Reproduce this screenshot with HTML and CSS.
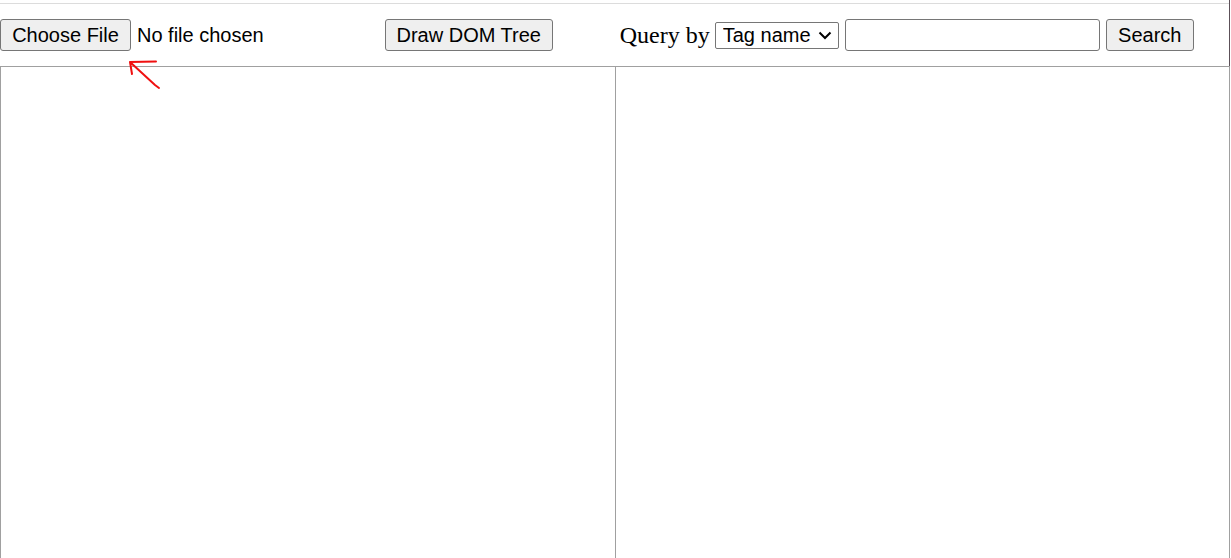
FILE: index.html
```
<!DOCTYPE html>
<html>
<head>
<meta charset="utf-8">
<link rel="stylesheet" href="styles.css">
</head>
<body>
<div class="page">
  <div class="header">
    <div class="topline"></div>
    <div class="toolbar">
      <div class="file-group">
        <button class="btn btn-file">Choose File</button>
        <span class="file-label">No file chosen</span>
      </div>
      <button class="btn btn-draw">Draw DOM Tree</button>
      <div class="query-group">
        <span class="query-label">Query by</span>
        <span class="select-wrap">
          <select class="select">
            <option>Tag name</option>
          </select>
          <svg class="chevron" width="14" height="9" viewBox="0 0 14 9">
            <path d="M1.5 1.5 L7 7 L12.5 1.5" fill="none" stroke="#000" stroke-width="2"/>
          </svg>
        </span>
        <input class="text-input" type="text">
        <button class="btn btn-search">Search</button>
      </div>
    </div>
  </div>
  <div class="panels">
    <div class="panel panel-left"></div>
    <div class="panel panel-right"></div>
  </div>
  <svg class="annotation" width="44" height="40" viewBox="0 0 44 40">
    <path d="M5 5 L31 4.5 M5 5 L7 17 M5 5 L30 28 L34 31" fill="none" stroke="#f01010" stroke-width="2" stroke-linecap="round" stroke-linejoin="round"/>
  </svg>
</div>
</body>
</html>
```

FILE: styles.css
```
html, body {
  margin: 0;
  padding: 0;
  background: #ffffff;
  overflow: hidden;
}

.page {
  position: relative;
  width: 1231px;
  height: 558px;
  font-family: "Liberation Sans", Arial, sans-serif;
  color: #000;
}

.header {
  width: 1230px;
  border-right: 1px solid #5c5058;
  box-sizing: border-box;
}

.topline {
  height: 3px;
  border-bottom: 1px solid #dcdcdc;
}

.toolbar {
  display: flex;
  align-items: center;
  height: 62px;
}

.btn {
  font-family: "Liberation Sans", Arial, sans-serif;
  font-size: 20px;
  color: #000;
  background: #efefef;
  border: 1px solid #767676;
  border-radius: 3px;
  height: 32px;
  padding: 0;
  margin: 0;
  line-height: 1;
}

.file-group {
  display: flex;
  align-items: center;
}

.btn-file {
  width: 131px;
}

.file-label {
  font-size: 20px;
  margin-left: 6px;
}

.btn-draw {
  width: 168px;
  margin-left: 121px;
}

.query-group {
  display: flex;
  align-items: center;
  margin-left: 67px;
}

.query-label {
  font-family: "Liberation Serif", "Times New Roman", serif;
  font-size: 24px;
  margin-right: 5px;
}

.select-wrap {
  position: relative;
  display: flex;
}

.select {
  -webkit-appearance: none;
  appearance: none;
  font-family: "Liberation Sans", Arial, sans-serif;
  font-size: 20px;
  height: 27px;
  width: 124px;
  border: 1px solid #767676;
  border-radius: 2px;
  background: #fff;
  color: #000;
  padding: 0 0 0 7px;
  margin: 0;
}

.chevron {
  position: absolute;
  right: 7px;
  top: 9px;
  pointer-events: none;
}

.text-input {
  width: 255px;
  height: 32px;
  box-sizing: border-box;
  border: 1px solid #767676;
  border-radius: 3px;
  margin: 0 0 0 6px;
  padding: 2px 4px;
  font-size: 20px;
}

.btn-search {
  width: 88px;
  margin-left: 6px;
}

.panels {
  display: flex;
  height: 492px;
  border-top: 1px solid #a0a0a0;
  width: 1230px;
}

.panel {
  height: 100%;
  box-sizing: border-box;
}

.panel-left {
  width: 616px;
  border-left: 1px solid #a0a0a0;
  border-right: 1px solid #a0a0a0;
}

.panel-right {
  width: 614px;
  border-right: 1px solid #a0a0a0;
}

.annotation {
  position: absolute;
  left: 125px;
  top: 57px;
}
```
